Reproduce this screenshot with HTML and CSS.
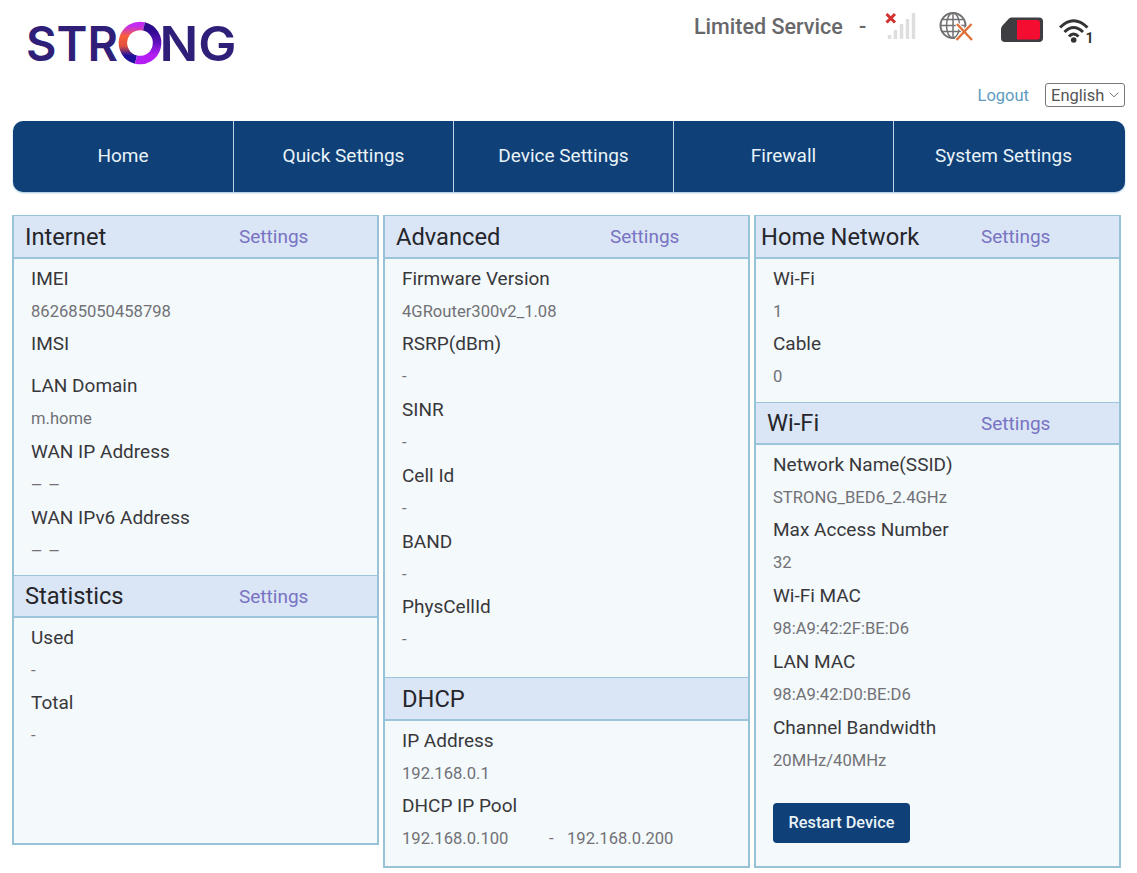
FILE: index.html
```
<!DOCTYPE html>
<html lang="en">
<head>
    <meta charset="UTF-8">
    <meta name="viewport" content="width=device-width, initial-scale=1.0">
    <title>STRONG 4G Router</title>
    <link rel="stylesheet" href="styles.css">
</head>
<body>
    <header class="header">
        <svg class="logo" width="210" height="50" viewBox="0 0 210 50" role="img" aria-label="STRONG">
            <defs>
                <linearGradient id="ringLeft" x1="0" y1="0" x2="0" y2="1">
                    <stop offset="0" stop-color="#c32cf0"/>
                    <stop offset="0.3" stop-color="#f9603a"/>
                    <stop offset="0.6" stop-color="#e0503e"/>
                    <stop offset="0.88" stop-color="#1d0f9c"/>
                </linearGradient>
                <linearGradient id="ringRight" x1="0" y1="0" x2="0" y2="1">
                    <stop offset="0.1" stop-color="#2c0a8c"/>
                    <stop offset="0.45" stop-color="#5a10b8"/>
                    <stop offset="0.85" stop-color="#b41ef5"/>
                </linearGradient>
            </defs>
            <g class="logo-text">
                <text x="-1" y="42" textLength="92" lengthAdjust="spacingAndGlyphs">STR</text>
                <text x="132.500" y="42" textLength="77" lengthAdjust="spacingAndGlyphs">NG</text>
            </g>
            <g fill="none" stroke-width="8.500">
                <path d="M117 7.400A17 17 0 0 0 109 40.600" stroke="url(#ringLeft)"/>
                <path d="M117 7.400A17 17 0 1 1 109 40.600" stroke="url(#ringRight)"/>
            </g>
        </svg>
        <div class="header-right">
            <div class="status">
                <span class="status-text">Limited Service</span>
                <span class="status-dash">-</span>
                <svg class="icon-signal" width="32" height="28" viewBox="0 0 32 28">
                    <path d="M4.500 23v4M10.500 18v9M16.500 12v15M22.500 7v20M28.500 1v26" stroke="#dedede" stroke-width="3.500"/>
                    <path d="M1.500 2l8.500 8.500M10 2l-8.500 8.500" stroke="#d3302f" stroke-width="3"/>
                </svg>
                <svg class="icon-globe" width="34" height="30" viewBox="0 0 34 30">
                    <g fill="none" stroke="#717174" stroke-width="1.500">
                        <circle cx="14" cy="13.500" r="12.500" stroke-width="2"/>
                        <ellipse cx="14" cy="13.500" rx="6.500" ry="12.500"/>
                        <path d="M14 1v25M1.500 13.500h25M3.500 7.500h21M3.500 19.500h21"/>
                    </g>
                    <path d="M18 12L33 28M32.500 12L17.500 28" stroke="#fff" stroke-width="4.500"/>
                    <path d="M18 12L33 28M32.500 12L17.500 28" stroke="#df7037" stroke-width="2.400"/>
                </svg>
                <svg class="icon-sim" width="42" height="26" viewBox="0 0 42 26">
                    <path d="M10.500 0.500H38a4 4 0 0 1 4 4V21a4 4 0 0 1-4 4H4a4 4 0 0 1-4-4V12Q0 10 1.500 8.500L8 1.500Q9 .5 10.500 .5z" fill="#3d3d42"/>
                    <path d="M16 3h20.500a2.500 2.500 0 0 1 2.500 2.500V20a2.500 2.500 0 0 1-2.500 2.500H16z" fill="#f40d31"/>
                </svg>
                <svg class="icon-wifi" width="36" height="26" viewBox="0 0 36 26">
                    <g fill="none" stroke="#333" stroke-width="3">
                        <path d="M1 9.500Q14.500-4 28.500 9.500"/>
                        <path d="M5.500 14Q14.500 5 24 14"/>
                        <path d="M10 18.500Q14.500 13.500 19.500 18.500"/>
                    </g>
                    <circle cx="14.700" cy="22" r="2.800" fill="#333"/>
                    <text x="26.500" y="24.500" class="wifi-count">1</text>
                </svg>
            </div>
            <div class="account">
                <a class="logout">Logout</a>
                <div class="language">English
                    <svg width="10" height="6" viewBox="0 0 10 6"><path d="M.7.7L5 4.800 9.300.7" fill="none" stroke="#777"/></svg>
                </div>
            </div>
        </div>
    </header>

    <nav class="nav">
        <a>Home</a>
        <a>Quick Settings</a>
        <a>Device Settings</a>
        <a>Firewall</a>
        <a>System Settings</a>
    </nav>

    <main class="columns">
        <div class="column column-short">
            <section class="panel internet">
                <div class="panel-head"><h2>Internet</h2><a>Settings</a></div>
                <dl>
                    <dt>IMEI</dt><dd>862685050458798</dd>
                    <dt>IMSI</dt><dd class="empty"></dd>
                    <dt>LAN Domain</dt><dd>m.home</dd>
                    <dt>WAN IP Address</dt><dd class="dashes">— —</dd>
                    <dt>WAN IPv6 Address</dt><dd class="dashes">— —</dd>
                </dl>
            </section>
            <section class="panel">
                <div class="panel-head"><h2>Statistics</h2><a>Settings</a></div>
                <dl>
                    <dt>Used</dt><dd>-</dd>
                    <dt>Total</dt><dd>-</dd>
                </dl>
            </section>
        </div>

        <div class="column">
            <section class="panel advanced">
                <div class="panel-head"><h2>Advanced</h2><a>Settings</a></div>
                <dl>
                    <dt>Firmware Version</dt><dd>4GRouter300v2_1.08</dd>
                    <dt>RSRP(dBm)</dt><dd>-</dd>
                    <dt>SINR</dt><dd>-</dd>
                    <dt>Cell Id</dt><dd>-</dd>
                    <dt>BAND</dt><dd>-</dd>
                    <dt>PhysCellId</dt><dd>-</dd>
                </dl>
            </section>
            <section class="panel">
                <div class="panel-head indent"><h2>DHCP</h2></div>
                <dl>
                    <dt>IP Address</dt><dd>192.168.0.1</dd>
                    <dt>DHCP IP Pool</dt>
                    <dd class="pool"><span>192.168.0.100</span><span>-</span><span>192.168.0.200</span></dd>
                </dl>
            </section>
        </div>

        <div class="column">
            <section class="panel network">
                <div class="panel-head outdent"><h2>Home Network</h2><a>Settings</a></div>
                <dl>
                    <dt>Wi-Fi</dt><dd>1</dd>
                    <dt>Cable</dt><dd>0</dd>
                </dl>
            </section>
            <section class="panel">
                <div class="panel-head"><h2>Wi-Fi</h2><a>Settings</a></div>
                <dl>
                    <dt>Network Name(SSID)</dt><dd>STRONG_BED6_2.4GHz</dd>
                    <dt>Max Access Number</dt><dd>32</dd>
                    <dt>Wi-Fi MAC</dt><dd>98:A9:42:2F:BE:D6</dd>
                    <dt>LAN MAC</dt><dd>98:A9:42:D0:BE:D6</dd>
                    <dt>Channel Bandwidth</dt><dd>20MHz/40MHz</dd>
                </dl>
                <button class="restart" type="button">Restart Device</button>
            </section>
        </div>
    </main>
</body>
</html>
```
FILE: styles.css
```
* {
    box-sizing: border-box;
}
body {
    margin: 0;
    height: 873px;
    overflow: hidden;
    background: #fff;
    color: #333;
    font-family: Roboto, "Liberation Sans", Arial, sans-serif;
}
.header {
    display: flex;
    justify-content: space-between;
    height: 121px;
    padding: 0 12px 0 27px;
}
.logo {
    margin-top: 19px;
    overflow: visible;
}
.logo-text {
    fill: #2f1f78;
    font-family: Inter, sans-serif;
    font-size: 48px;
    font-weight: 600;
}
.header-right {
    width: 431px;
}
.status {
    display: flex;
    align-items: flex-start;
    height: 83px;
    padding-top: 12px;
}
.status-text,
.status-dash {
    color: #68686a;
    font-size: 21.500px;
    font-weight: 500;
    line-height: 30px;
    white-space: nowrap;
}
.status-text {
    width: 165px;
}
.status-dash {
    width: 26px;
}
.icon-globe {
    margin-left: 22px;
}
.icon-sim {
    margin: 5px 0 0 28px;
}
.icon-wifi {
    margin: 6px 0 0 16px;
}
.wifi-count {
    fill: #333;
    font-size: 14px;
    font-weight: 700;
}
.account {
    display: flex;
    justify-content: flex-end;
    align-items: center;
    gap: 16px;
    height: 24px;
    font-size: 16.500px;
}
.logout {
    color: #5f9bc0;
}
.language {
    display: flex;
    align-items: center;
    justify-content: space-between;
    width: 80px;
    height: 24px;
    padding: 0 5px;
    border: 1px solid #777;
    border-radius: 3px;
    color: #555;
}
.nav {
    display: flex;
    height: 71px;
    margin: 0 12px 0 13px;
    background: #0f4077;
    border-radius: 10px;
    box-shadow: 0 1px 2px #9fc3dc;
}
.nav a {
    width: 220px;
    color: #e9f3f8;
    font-size: 19px;
    line-height: 70px;
    text-align: center;
}
.nav a + a {
    border-left: 1px solid #b9d5e4;
}
.columns {
    display: flex;
    align-items: flex-start;
    gap: 4px;
    padding: 23px 0 0 12px;
}
.column {
    display: flex;
    flex-direction: column;
    width: 367px;
    height: 653px;
    background: #f4f9fc;
    border: 1px solid #98c2d8;
    border-width: 1px 2px 2px;
}
.column-short {
    height: 630px;
}
.internet {
    height: 359px;
}
.advanced {
    height: 461px;
}
.network {
    height: 186px;
}
.panel-head {
    display: grid;
    grid-template-columns: 214px 1fr;
    align-items: center;
    height: 43px;
    padding-left: 11px;
    background: #dae5f6;
    border-bottom: 2px solid #9cc5dc;
}
.panel + .panel .panel-head {
    border-top: 1px solid #9cc5dc;
}
.panel + .panel .panel-head.indent {
    height: 44px;
}
.panel-head h2 {
    margin: 0;
    color: #25252b;
    font-size: 23.700px;
    font-weight: 400;
    line-height: 30px;
    white-space: nowrap;
}
.panel-head a {
    color: #7873c2;
    font-size: 19px;
}
.panel-head.indent {
    padding-left: 17px;
}
.panel-head.outdent {
    grid-template-columns: 220px 1fr;
    padding-left: 5px;
}
dl {
    margin: 0;
    padding: 2.500px 0 0 17px;
}
dt {
    height: 33px;
    color: #38383b;
    font-size: 19px;
    line-height: 33px;
}
dd {
    height: 32.800px;
    margin: 0;
    color: #717176;
    font-size: 16.600px;
    line-height: 34px;
}
dd.empty {
    height: 9px;
}
dd.dashes {
    font-size: 14px;
    word-spacing: 3px;
}
.pool {
    display: flex;
}
.pool span:nth-child(1) {
    width: 147px;
}
.pool span:nth-child(2) {
    width: 18px;
}
.restart {
    display: block;
    width: 137px;
    height: 40px;
    margin: 26.500px 0 0 17px;
    padding: 0;
    background: #0f4077;
    border: none;
    border-radius: 4px;
    color: #e9f3f8;
    font: 500 16.300px Roboto, sans-serif;
}
```
